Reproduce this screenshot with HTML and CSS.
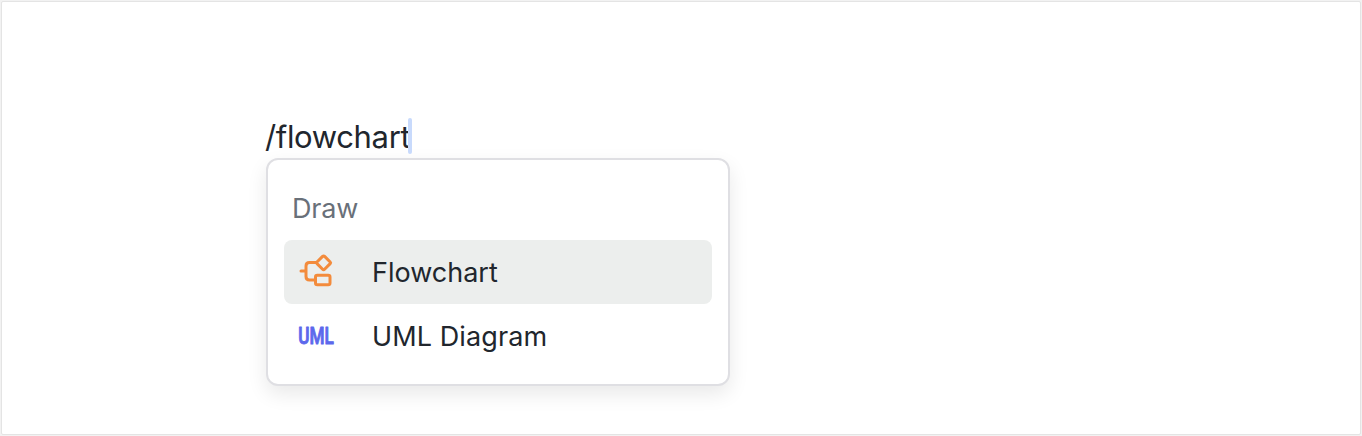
FILE: index.html
```html
<!DOCTYPE html>
<html lang="en">
<head>
  <meta charset="UTF-8">
  <title>Slash command menu</title>
  <meta name="viewport" content="width=device-width, initial-scale=1.0">

  <link rel="stylesheet" href="styles.css">
</head>
<body>
  <div class="editor">
    <!-- Typed command -->
    <div class="command-line">
      <span class="command">/flowchart</span><span class="caret"></span>
    </div>

    <!-- Suggestions -->
    <div class="menu">
      <div class="menu-title">Draw</div>

      <div class="menu-item active">
        <svg class="icon" viewBox="0 0 36 36" fill="none" stroke="#f38b3c" stroke-width="3" stroke-linejoin="round" stroke-linecap="round">
          <path d="M3 17H8M18 8.5H11.5Q8 8.5 8 12V22.5Q8 26 11.5 26H17"/>
          <path d="M24.6 2.4Q25.6 1.4 26.6 2.4L32.2 8Q33 8.8 32.2 9.6L26.6 15.2Q25.6 16.2 24.6 15.2L19 9.6Q18.2 8.8 19 8Z"/>
          <rect x="17.5" y="21.2" width="14.5" height="9.5" rx="1.8"/>
        </svg>
        <span class="label">Flowchart</span>
      </div>

      <div class="menu-item">
        <svg class="icon" viewBox="0 0 36 36">
          <text class="uml" x="0.3" y="25.7" textLength="35.5" lengthAdjust="spacingAndGlyphs">UML</text>
        </svg>
        <span class="label wide">UML Diagram</span>
      </div>
    </div>
  </div>
</body>
</html>
```
FILE: styles.css
```css
* {
  box-sizing: border-box;
}

body {
  margin: 0;
  height: 100vh;
  padding: 1px;
  background: #f2f2f2;
  font-family: Inter, "Liberation Sans", sans-serif;
  color: #21262d;
}

.editor {
  height: 100%;
  padding: 115px 0 0 264px;
  background: white;
  border: 1px solid #e4e4e4;
  border-radius: 2px;
}

.command-line {
  display: flex;
  height: 41px;
  align-items: flex-start;
}

.command {
  margin-left: -1px;
  font-size: 31px;
  line-height: 39px;
  letter-spacing: -0.35px;
}

.caret {
  width: 4px;
  height: 36px;
  margin-top: 1px;
  margin-left: -2px;
  border-radius: 2px;
  background: #c8dafc;
}

.menu {
  width: 464px;
  height: 228px;
  padding: 16px;
  background: white;
  border: 2px solid #dfdfe3;
  border-radius: 12px;
  box-shadow: 0 8px 20px rgba(0, 0, 0, 0.09);
}

.menu-title {
  height: 64px;
  padding-left: 8px;
  font-size: 27px;
  line-height: 66px;
  letter-spacing: -0.2px;
  color: #697079;
}

.menu-item {
  display: flex;
  align-items: center;
  height: 64px;
  padding-left: 14px;
  border-radius: 8px;
}

.menu-item.active {
  background: #eceeed;
}

.icon {
  width: 36px;
  height: 36px;
  margin-right: 38px;
  overflow: visible;
}

.uml {
  font-family: Roboto, "Liberation Sans", sans-serif;
  font-size: 23.5px;
  font-weight: 500;
  fill: #5c68ec;
  stroke: #5c68ec;
  stroke-width: 1px;
  stroke-linejoin: round;
}

.label {
  font-size: 27px;
}

.label.wide {
  letter-spacing: 0.1px;
}
```
